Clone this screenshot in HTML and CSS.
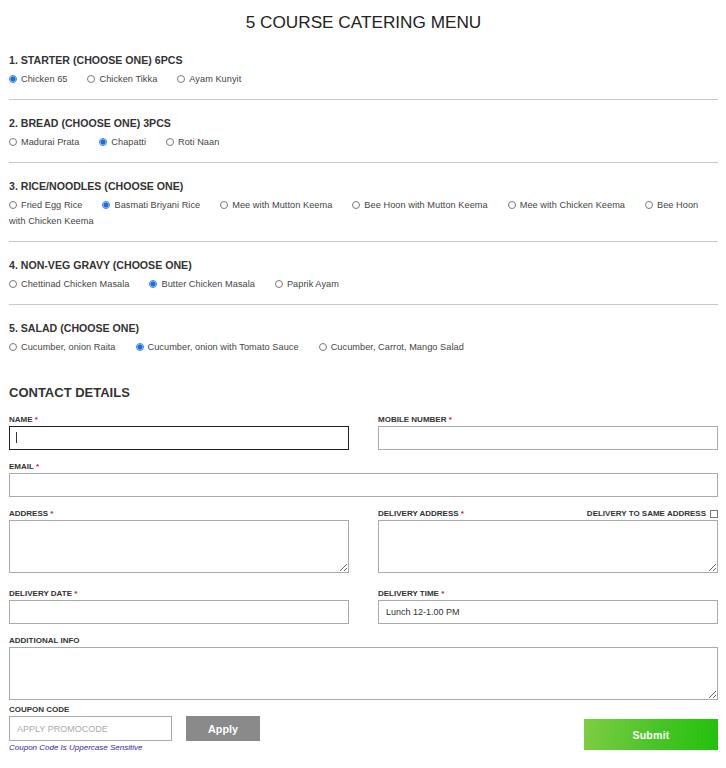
FILE: index.html
```html
<!DOCTYPE html>
<html lang="en">
<head>
<meta charset="utf-8">
<title>5 Course Catering Menu</title>
<link rel="stylesheet" href="styles.css">
</head>
<body>
<div class="page">
  <h1 class="title">5 COURSE CATERING MENU</h1>

  <section class="course">
    <h2 class="course-title">1. STARTER (CHOOSE ONE) 6PCS</h2>
    <div class="options"><label class="opt"><input class="radio" type="radio" name="c1" checked>Chicken 65</label><label class="opt"><input class="radio" type="radio" name="c1">Chicken Tikka</label><label class="opt"><input class="radio" type="radio" name="c1">Ayam Kunyit</label></div>
  </section>

  <section class="course">
    <h2 class="course-title">2. BREAD (CHOOSE ONE) 3PCS</h2>
    <div class="options"><label class="opt"><input class="radio" type="radio" name="c2">Madurai Prata</label><label class="opt"><input class="radio" type="radio" name="c2" checked>Chapatti</label><label class="opt"><input class="radio" type="radio" name="c2">Roti Naan</label></div>
  </section>

  <section class="course">
    <h2 class="course-title">3. RICE/NOODLES (CHOOSE ONE)</h2>
    <div class="options"><label class="opt"><input class="radio" type="radio" name="c3">Fried Egg Rice</label><label class="opt"><input class="radio" type="radio" name="c3" checked>Basmati Briyani Rice</label><label class="opt"><input class="radio" type="radio" name="c3">Mee with Mutton Keema</label><label class="opt"><input class="radio" type="radio" name="c3">Bee Hoon with Mutton Keema</label><label class="opt"><input class="radio" type="radio" name="c3">Mee with Chicken Keema</label><label class="opt"><input class="radio" type="radio" name="c3">Bee Hoon with Chicken Keema</label></div>
  </section>

  <section class="course">
    <h2 class="course-title">4. NON-VEG GRAVY (CHOOSE ONE)</h2>
    <div class="options"><label class="opt"><input class="radio" type="radio" name="c4">Chettinad Chicken Masala</label><label class="opt"><input class="radio" type="radio" name="c4" checked>Butter Chicken Masala</label><label class="opt"><input class="radio" type="radio" name="c4">Paprik Ayam</label></div>
  </section>

  <section class="course last">
    <h2 class="course-title">5. SALAD (CHOOSE ONE)</h2>
    <div class="options"><label class="opt"><input class="radio" type="radio" name="c5">Cucumber, onion Raita</label><label class="opt"><input class="radio" type="radio" name="c5" checked>Cucumber, onion with Tomato Sauce</label><label class="opt"><input class="radio" type="radio" name="c5">Cucumber, Carrot, Mango Salad</label></div>
  </section>

  <h2 class="contact-title">CONTACT DETAILS</h2>

  <div class="grid2">
    <div class="field">
      <label class="lbl">NAME <span class="req">*</span></label>
      <div class="caret-wrap"><input class="inp focus" type="text"><span class="caret"></span></div>
    </div>
    <div class="field">
      <label class="lbl">MOBILE NUMBER <span class="req">*</span></label>
      <input class="inp" type="text">
    </div>
  </div>

  <div class="field">
    <label class="lbl">EMAIL <span class="req">*</span></label>
    <input class="inp" type="text">
  </div>

  <div class="grid2">
    <div class="field field-tall">
      <label class="lbl">ADDRESS <span class="req">*</span></label>
      <textarea class="inp ta"></textarea>
    </div>
    <div class="field field-tall">
      <div class="lbl-row">
        <label class="lbl">DELIVERY ADDRESS <span class="req">*</span></label>
        <label class="lbl same">DELIVERY TO SAME ADDRESS <input class="check" type="checkbox"></label>
      </div>
      <textarea class="inp ta"></textarea>
    </div>
  </div>

  <div class="grid2">
    <div class="field">
      <label class="lbl">DELIVERY DATE <span class="req">*</span></label>
      <input class="inp" type="text">
    </div>
    <div class="field">
      <label class="lbl">DELIVERY TIME <span class="req">*</span></label>
      <input class="inp" type="text" value="Lunch 12-1.00 PM">
    </div>
  </div>

  <div class="field field-info">
    <label class="lbl">ADDITIONAL INFO</label>
    <textarea class="inp ta"></textarea>
  </div>

  <div class="coupon-row">
    <div class="coupon">
      <label class="lbl">COUPON CODE</label>
      <div class="coupon-line">
        <input class="inp coupon-inp" type="text" placeholder="APPLY PROMOCODE">
        <button class="apply" type="button">Apply</button>
      </div>
      <p class="note">Coupon Code Is Uppercase Sensitive</p>
    </div>
    <button class="submit" type="button">Submit</button>
  </div>
</div>
</body>
</html>
```
FILE: styles.css
```css
body {
  margin: 0;
  background: #fff;
  color: #333;
  font-family: "Liberation Sans", Arial, sans-serif;
}

.page {
  padding: 12px 8px 20px 9px;
}

.title {
  margin: 0 0 22px;
  font-size: 17.2px;
  line-height: 20px;
  font-weight: normal;
  text-align: center;
  color: #222;
}

.course {
  border-bottom: 1px solid #c8c8c8;
  padding-bottom: 13px;
  margin-bottom: 17px;
}

.course.last {
  border-bottom: none;
  padding-bottom: 0;
  margin-bottom: 0;
}

.course-title {
  margin: 0 0 3px;
  font-size: 10.6px;
  line-height: 13px;
  font-weight: bold;
  color: #333;
}

.options {
  font-size: 9.2px;
  line-height: 16px;
  letter-spacing: 0.05px;
  color: #444;
  padding: 1px 4px 0 0;
  margin-bottom: -1px;
}

.opt {
  margin-right: 20px;
}

.radio {
  appearance: none;
  -webkit-appearance: none;
  box-sizing: border-box;
  width: 8px;
  height: 8px;
  margin: 0 4px 0 0;
  border: 1px solid #7a7a7a;
  border-radius: 50%;
  background: #fff;
  vertical-align: -1px;
}

.radio:checked {
  border-color: #2f7fe6;
  background: radial-gradient(circle, #1a6fe0 0 2.3px, #cfe2fb 2.8px, #fff 3.2px);
}

.contact-title {
  margin: 31px 0 14px;
  font-size: 13px;
  line-height: 16px;
  font-weight: bold;
  color: #333;
}

.grid2 {
  display: grid;
  grid-template-columns: 1fr 1fr;
  column-gap: 29px;
}

.field {
  margin-bottom: 12px;
}

.field-tall {
  margin-bottom: 16px;
}

.field-info {
  margin-bottom: 5px;
}

.lbl {
  display: block;
  font-size: 8px;
  line-height: 10px;
  font-weight: bold;
  color: #333;
  margin-bottom: 1px;
}

.req {
  color: #d4141c;
}

.lbl-row {
  display: flex;
  justify-content: space-between;
}

.same {
  display: flex;
  align-items: center;
}

.check {
  appearance: none;
  -webkit-appearance: none;
  box-sizing: border-box;
  width: 8px;
  height: 8px;
  margin: 0 0 0 4px;
  border: 1px solid #777;
  background: #fff;
}

.inp {
  display: block;
  box-sizing: border-box;
  width: 100%;
  height: 24px;
  margin: 0;
  padding: 0 7px;
  border: 1px solid #aaa;
  border-radius: 0;
  outline: none;
  background: #fff;
  font-family: "Liberation Sans", Arial, sans-serif;
  font-size: 9px;
  color: #333;
}

.inp.focus {
  border-color: #222;
}

.inp::placeholder {
  color: #aaa;
}

.caret-wrap {
  position: relative;
}

.caret {
  position: absolute;
  left: 7px;
  top: 6px;
  width: 1px;
  height: 11px;
  background: #333;
}

.ta {
  height: 53px;
  resize: both;
}

.coupon-row {
  display: flex;
  justify-content: space-between;
  align-items: flex-start;
}

.coupon-line {
  display: flex;
  align-items: flex-start;
}

.coupon-inp {
  width: 163px;
  height: 25px;
}

.apply {
  width: 74px;
  height: 25px;
  margin-left: 14px;
  border: none;
  background: #8a8a8a;
  color: #fff;
  font-family: "Liberation Sans", Arial, sans-serif;
  font-size: 10.8px;
  font-weight: bold;
  cursor: pointer;
}

.note {
  margin: 2px 0 0;
  font-size: 8px;
  line-height: 10px;
  font-style: italic;
  color: #3b1e96;
}

.submit {
  width: 134px;
  height: 31px;
  margin-top: 14px;
  border: none;
  background: linear-gradient(100deg, #80cc42 0%, #4cc52a 50%, #22c10a 100%);
  color: #fff;
  font-family: "Liberation Sans", Arial, sans-serif;
  font-size: 10.6px;
  font-weight: bold;
  letter-spacing: 0.2px;
  cursor: pointer;
}
```
